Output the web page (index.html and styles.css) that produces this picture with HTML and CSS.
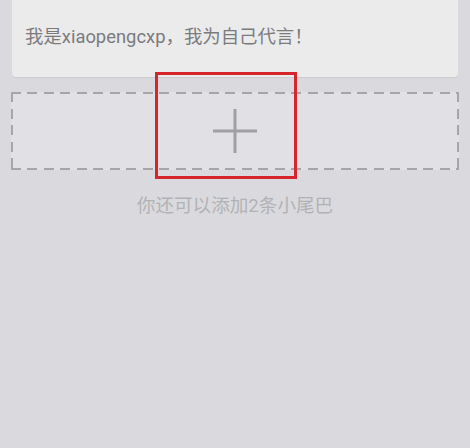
FILE: index.html
```html
<!DOCTYPE html>
<html lang="zh-CN">
<head>
<meta charset="utf-8">
<title>小尾巴</title>
<link rel="stylesheet" href="styles.css">
</head>
<body>
<div class="page">
  <div class="card">
    <p class="card-text">我是xiaopengcxp，我为自己代言！</p>
  </div>
  <div class="add-box">
    <svg class="plus" width="46" height="46" viewBox="0 0 46 46" aria-hidden="true">
      <path d="M1 23H45M23 1V45" stroke="#a0a0a4" stroke-width="3" fill="none"/>
    </svg>
    <div class="highlight"></div>
  </div>
  <p class="hint">你还可以添加2条小尾巴</p>
</div>
</body>
</html>
```
FILE: styles.css
```css
html, body {
  margin: 0;
  padding: 0;
  background: #dadade;
  height: 100%;
}

.page {
  padding: 0 11px;
  font-family: Roboto, "Noto Sans CJK SC", sans-serif;
}

.card {
  margin: 0 1px;
  height: 77px;
  box-sizing: border-box;
  background: #ebebec;
  border-radius: 0 0 4px 4px;
  box-shadow: 0 1px 1px rgba(0, 0, 0, 0.06);
  padding: 25px 13px 0;
}

.card-text {
  margin: 0;
  font-size: 18.4px;
  line-height: 24px;
  color: #7b7b7d;
  white-space: nowrap;
}

.add-box {
  position: relative;
  margin-top: 15px;
  height: 78px;
  display: flex;
  align-items: center;
  justify-content: center;
  background-color: #e1e1e5;
  background-image:
    repeating-linear-gradient(90deg, #a6a6aa 0 10px, transparent 10px 16.5px),
    repeating-linear-gradient(90deg, #a6a6aa 0 10px, transparent 10px 16.5px),
    repeating-linear-gradient(180deg, #a6a6aa 0 10px, transparent 10px 16.5px),
    repeating-linear-gradient(180deg, #a6a6aa 0 10px, transparent 10px 16.5px);
  background-size: 100% 2px, 100% 2px, 2px 100%, 2px 100%;
  background-position: left top, left bottom, left top, right top;
  background-repeat: no-repeat;
}

.plus {
  display: block;
}

.highlight {
  position: absolute;
  left: 144px;
  top: -20px;
  width: 142px;
  height: 107px;
  box-sizing: border-box;
  border: 3px solid #d7252c;
}

.hint {
  margin: 24px 0 0;
  text-align: center;
  font-size: 18.6px;
  line-height: 24px;
  color: #b2b2b6;
}
```
